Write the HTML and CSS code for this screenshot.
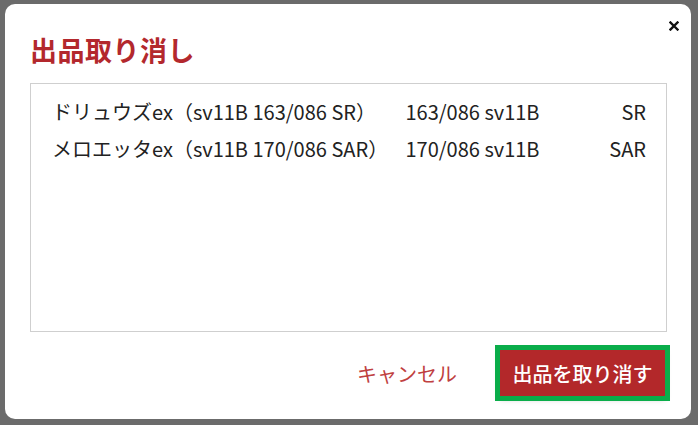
FILE: index.html
```html
<!DOCTYPE html>
<html lang="ja">
<head>
<meta charset="utf-8">
<link rel="stylesheet" href="styles.css">
</head>
<body>
<div class="overlay">
  <div class="dialog">
    <button class="close" aria-label="閉じる">
      <svg width="10" height="10" viewBox="0 0 10 10"><path d="M1.5 1.5 L8.5 8.5 M8.5 1.5 L1.5 8.5" stroke="#111" stroke-width="2.4" stroke-linecap="square"/></svg>
    </button>
    <h1 class="title">出品取り消し</h1>
    <div class="list">
      <div class="row">
        <span class="name">ドリュウズex（sv11B 163/086 SR）</span>
        <span class="num">163/086 sv11B</span>
        <span class="rarity">SR</span>
      </div>
      <div class="row">
        <span class="name">メロエッタex（sv11B 170/086 SAR）</span>
        <span class="num">170/086 sv11B</span>
        <span class="rarity">SAR</span>
      </div>
    </div>
    <div class="footer">
      <button class="cancel">キャンセル</button>
      <button class="confirm">出品を取り消す</button>
    </div>
  </div>
</div>
</body>
</html>
```

FILE: styles.css
```css
* { box-sizing: border-box; }
html, body {
  margin: 0;
  padding: 0;
  width: 698px;
  height: 425px;
  overflow: hidden;
}
body {
  font-family: "Noto Sans CJK JP", "Noto Sans", sans-serif;
  background: #6b6b6b;
}
.overlay {
  padding: 4px 7px 6px 5px;
  height: 425px;
}
.dialog {
  position: relative;
  background: #fff;
  border-radius: 10px;
  height: 415px;
  padding: 28px 24px 0 25px;
  display: flex;
  flex-direction: column;
}
.close {
  position: absolute;
  top: 17px;
  right: 12px;
  border: 0;
  background: none;
  padding: 0;
  width: 10px;
  height: 10px;
  display: flex;
}
.title {
  margin: 0 0 15px 0;
  font-size: 27px;
  line-height: 36px;
  font-weight: 700;
  color: #b3282d;
  letter-spacing: 0.5px;
}
.list {
  border: 1px solid #cfcfcf;
  height: 249px;
  flex: none;
  padding: 9px 20px 0 21px;
}
.row {
  display: grid;
  grid-template-columns: 340px 1fr 60px;
  align-items: center;
  height: 37px;
  font-size: 20px;
  color: #222;
}
.name { white-space: nowrap; }
.num { text-align: center; padding-right: 33px; white-space: nowrap; }
.rarity { text-align: right; }
.footer {
  display: flex;
  justify-content: flex-end;
  align-items: center;
  gap: 43px;
  margin-top: 18px;
  padding-right: 2px;
}
.cancel {
  border: 0;
  background: none;
  font-family: inherit;
  font-size: 20px;
  color: #c0403f;
  padding: 0;
}
.confirm {
  border: 0;
  background: #b3282a;
  color: #fff;
  font-family: inherit;
  font-size: 20px;
  font-weight: 500;
  width: 165px;
  height: 46px;
  padding: 0;
  outline: 5px solid #0aad4a;
  box-shadow: 0 3px 6px rgba(0,0,0,0.25);
}
```
